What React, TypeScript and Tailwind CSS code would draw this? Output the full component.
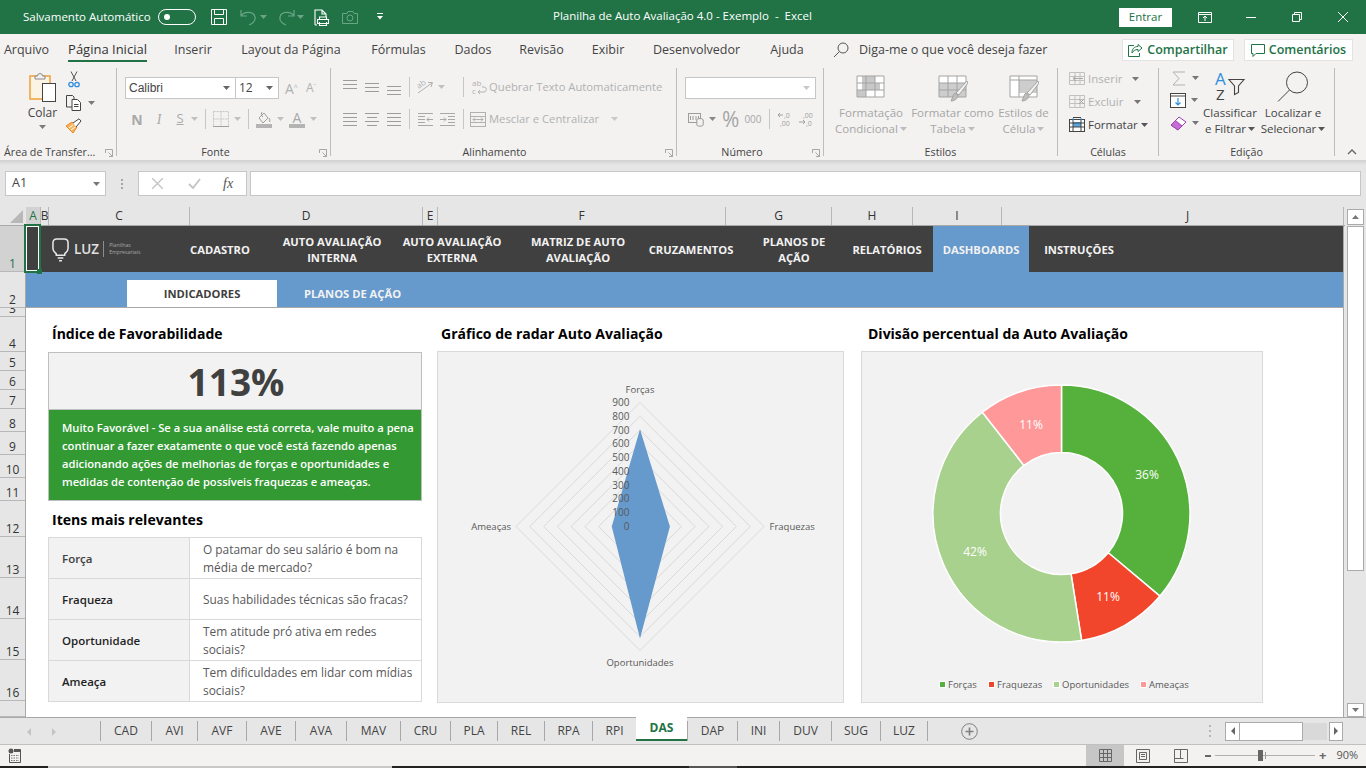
import React from "react";

const dim = "#b1b1b1";

const Caret = ({ c = "#7a7a7a", className = "" }: { c?: string; className?: string }) => (
  <svg width="7" height="4" viewBox="0 0 7 4" className={className}>
    <path d="M0 0h7L3.5 4z" fill={c} />
  </svg>
);

const Launcher = ({ c = "#a6a6a6" }: { c?: string }) => (
  <svg width="8" height="8" viewBox="0 0 8 8" fill="none" stroke={c}>
    <path d="M.5 4V.5H7.5V7.5H4M3.5 3.5L7 7M5 7.5H7.5V5" />
  </svg>
);

const Lines = ({ rows, c = "#9c9c9c", w = 14 }: { rows: [number, number, number][]; c?: string; w?: number }) => (
  <svg width={w} height="15" viewBox={`0 0 ${w} 15`} stroke={c} strokeWidth="1">
    {rows.map(([x1, x2, y], i) => (
      <path key={i} d={`M${x1} ${y + 0.5}H${x2}`} />
    ))}
  </svg>
);

const Clipboard = () => (
  <svg width="28" height="32" viewBox="0 0 28 32" fill="none">
    <rect x="1" y="5" width="20" height="23" fill="#fbf3e4" stroke="#f0a640" strokeWidth="1.6" />
    <path d="M6 8V5h2.5a2.5 2.5 0 0 1 5 0H16v3z" fill="#f3f2f1" stroke="#8a8a8a" />
    <rect x="13.5" y="12.5" width="13" height="18" fill="#fff" stroke="#444" />
  </svg>
);

const Scissors = () => (
  <svg width="12" height="17" viewBox="0 0 12 17" fill="none">
    <path d="M3 0.5L8 10M9 0.5L4 10" stroke="#555" />
    <circle cx="3" cy="13.5" r="2.2" stroke="#2f8fdc" strokeWidth="1.3" />
    <circle cx="9" cy="13.5" r="2.2" stroke="#2f8fdc" strokeWidth="1.3" />
  </svg>
);

const CopyIcon = () => (
  <svg width="17" height="16" viewBox="0 0 17 16" fill="none" stroke="#444">
    <path d="M1.5 .5H7.5L9 2V12H1.5z" fill="#f3f2f1" />
    <path d="M7 4.5H12.5L15.5 7.5V15.5H7z" fill="#fff" />
    <path d="M9 9.5H13.5M9 11.5H13.5" />
  </svg>
);

const Brush = () => (
  <svg width="17" height="16" viewBox="0 0 17 16" fill="none">
    <path d="M1 8L7 4L12 9L8 15z" fill="#f5b35e" stroke="#ea8a1f" />
    <path d="M4 10L8 7M6 12L10 9" stroke="#fff" />
    <path d="M8 5L14 .8L16 3L11 9" fill="#fff" stroke="#444" />
  </svg>
);

const Borders = () => (
  <svg width="16" height="16" viewBox="0 0 16 16" fill="none" stroke="#c4c4c4">
    <path d="M.5 .5H15.5V15M.5 .5V15M8 .5V15M.5 8H15.5" strokeDasharray="2 1" />
    <path d="M0 15.5H16" stroke="#9e9e9e" />
  </svg>
);

const FillColor = () => (
  <svg width="16" height="17" viewBox="0 0 16 17" fill="none">
    <path d="M3 7L8 2L12 7L7 12z" stroke="#9e9e9e" />
    <path d="M6 1C5 2 5 5 7 6M13 7C14 8 14 10 13.5 11" stroke="#9e9e9e" />
    <rect x="0" y="13" width="16" height="4" fill="#b4b4b4" />
  </svg>
);

const Orientation = () => (
  <svg width="18" height="16" viewBox="0 0 18 16" fill="none" stroke={dim} className="overflow-visible">
    <path d="M1 14L15 4M11 3.5L15.5 3.5L14 8" />
    <text x="0" y="8" fontSize="8" fill={dim} stroke="none" transform="rotate(-35 4 6)" fontFamily="'Open Sans',sans-serif">ab</text>
  </svg>
);

const WrapIcon = () => (
  <svg width="16" height="16" viewBox="0 0 16 16" fill="none" className="overflow-visible">
    <text x="0" y="7" fontSize="8" fill={dim} fontFamily="'Open Sans',sans-serif">ab</text>
    <text x="0" y="15" fontSize="8" fill={dim} fontFamily="'Open Sans',sans-serif">c</text>
    <path d="M6 13H12C15 13 15 8 12 8H10M8 11L6 13L8 15" stroke={dim} />
  </svg>
);

const MergeIcon = () => (
  <svg width="16" height="15" viewBox="0 0 16 15" fill="none" stroke={dim}>
    <rect x=".5" y=".5" width="15" height="14" />
    <path d="M0 4.5H16M0 10.5H16M3 7.5H13M5 5.5L3 7.5L5 9.5M11 5.5L13 7.5L11 9.5" />
  </svg>
);

const Indent = ({ flip = false }: { flip?: boolean }) => (
  <svg width="15" height="13" viewBox="0 0 15 13" fill="none" stroke="#a8a8a8">
    <path d="M0 .5H15M0 12.5H15" />
    {flip ? <path d="M8 3.5H15M8 6.5H15M8 9.5H15M0 6.5H6M4 4.5L6 6.5L4 8.5" /> : <path d="M0 3.5H7M0 9.5H7M9 6.5H15M11 4.5L9 6.5L11 8.5M0 6.5H7" />}
  </svg>
);

const Accounting = () => (
  <svg width="16" height="15" viewBox="0 0 16 15" fill="none" stroke="#9c9c9c">
    <rect x=".5" y="1.5" width="12" height="9" />
    <path d="M2.5 4V8M5 4V8M8 4V8M10.5 4V8" />
    <ellipse cx="12" cy="8" rx="3.2" ry="1.5" fill="#f3f2f1" />
    <path d="M8.8 8V13C8.8 14.5 15.2 14.5 15.2 13V8" fill="#f3f2f1" />
  </svg>
);

const Decimal = ({ a, b, left }: { a: string; b: string; left?: boolean }) => (
  <svg width="16" height="16" viewBox="0 0 16 16" fill="none" className="overflow-visible">
    <text x={left ? 7 : 4} y="7" fontSize="7" fill="#a0a0a0" fontFamily="'Open Sans',sans-serif">{a}</text>
    <text x={left ? 3 : 7} y="15" fontSize="7" fill="#a0a0a0" fontFamily="'Open Sans',sans-serif">{b}</text>
    <path d={left ? "M6 4H1M3 2L1 4L3 6" : "M0 11H6M4 9L6 11L4 13"} stroke="#a0a0a0" />
  </svg>
);

const StyleIcon = ({ kind }: { kind: number }) => (
  <svg width="30" height="28" viewBox="0 0 30 28" fill="none">
    {kind === 0 && (
      <>
        <rect x="1" y="1" width="27" height="21" fill="#fff" />
        <path d="M6 1H19V8H24V15H10V22H1V15H6z" fill="#c8c8c8" />
        <path d="M1 1H28V22H1zM1 8H28M1 15H28M10 1V22M19 1V22" stroke="#a3a3a3" />
      </>
    )}
    {kind === 1 && (
      <>
        <rect x="1" y="1" width="27" height="21" fill="#fff" />
        <rect x="1" y="8" width="27" height="14" fill="#cdcdcd" />
        <path d="M1 1H28V22H1zM1 8H28M1 15H28M10 1V22M19 1V22" stroke="#a3a3a3" />
      </>
    )}
    {kind === 2 && (
      <>
        <rect x="1" y="1" width="27" height="21" fill="#fff" />
        <rect x="10" y="5" width="18" height="13" fill="#cdcdcd" />
        <path d="M1 1H28V22H1zM1 5H28M10 1V22" stroke="#a3a3a3" />
      </>
    )}
    {kind !== 0 && (
      <>
        <path d="M29 6L18 18L21 20L30 8z" fill="#f3f2f1" stroke="#a3a3a3" />
        <path d="M13 26C16 26 20 24 20 20L17 18C15 19 15 22 13 26z" fill="#bdbdbd" stroke="#a3a3a3" />
      </>
    )}
  </svg>
);

const CellIcon = ({ kind }: { kind: number }) => (
  <svg width="17" height="15" viewBox="0 0 17 15" fill="none">
    {kind === 2 ? (
      <>
        <rect x=".5" y="2.5" width="15" height="12" fill="#fff" stroke="#444" />
        <rect x="4" y="5" width="8" height="5" fill="#5ba6dd" />
        <path d="M4 .5H12M.5 6H15.5M.5 10H15.5M4 2V15M12 2V15" stroke="#444" />
        <path d="M4 1V3M12 1V3" stroke="#2f8fdc" />
      </>
    ) : (
      <>
        <path d="M.5 1.5H15.5V13.5H.5zM.5 5.5H15.5M.5 9.5H15.5M6 1.5V13.5M11 1.5V13.5" stroke="#c1c1c1" />
        {kind === 0 ? <path d="M14 7.5H4M7 5L4 7.5L7 10" stroke="#a8a8a8" /> : <path d="M10 5L15 10M15 5L10 10" stroke="#a8a8a8" />}
      </>
    )}
  </svg>
);

const SortIcon = () => (
  <svg width="31" height="29" viewBox="0 0 31 29" fill="none" className="overflow-visible">
    <text x="0" y="13" fontSize="17" fill="#2f8fdc" fontFamily="'Open Sans',sans-serif">A</text>
    <text x="1" y="28" fontSize="15" fill="#444" fontFamily="'Open Sans',sans-serif">Z</text>
    <path d="M14 7.5H29L23.5 14V20.5L19.5 22.5V14z" stroke="#444" strokeWidth="1.1" />
  </svg>
);

const FindIcon = () => (
  <svg width="32" height="32" viewBox="0 0 32 32" fill="none" stroke="#444">
    <circle cx="20" cy="11.5" r="10.5" />
    <path d="M12.5 19L1 30.5" />
  </svg>
);

const Search = () => (
  <svg width="16" height="16" viewBox="0 0 16 16" fill="none" stroke="#555">
    <circle cx="10" cy="6" r="5" />
    <path d="M6.3 9.7L1 15" />
  </svg>
);

const tabsTop = [
  { t: "Arquivo", w: "w-[45px]", ml: "ml-[4px]" },
  { t: "Página Inicial", w: "w-[79px]", ml: "ml-[19px]", on: true },
  { t: "Inserir", w: "w-[36px]", ml: "ml-[28px]" },
  { t: "Layout da Página", w: "w-[100px]", ml: "ml-[30px]" },
  { t: "Fórmulas", w: "w-[53px]", ml: "ml-[31px]" },
  { t: "Dados", w: "w-[38px]", ml: "ml-[29px]" },
  { t: "Revisão", w: "w-[45px]", ml: "ml-[27px]" },
  { t: "Exibir", w: "w-[32px]", ml: "ml-[28px]" },
  { t: "Desenvolvedor", w: "w-[87px]", ml: "ml-[29px]" },
  { t: "Ajuda", w: "w-[34px]", ml: "ml-[30px]" },
];

const TitleBar = () => (
  <div className="h-[34px] bg-[#217346] flex items-center text-white text-[11.5px]">
    <div className="w-[553px] flex items-center shrink-0">
      <span className="ml-[23px] w-[135px] whitespace-nowrap">Salvamento Automático</span>
      <div className="w-[38px] h-[16px] rounded-full border border-white flex items-center pl-[5px]">
        <div className="w-[6px] h-[6px] rounded-full bg-white" />
      </div>
      <svg className="ml-[15px]" width="16" height="16" viewBox="0 0 16 16" fill="none" stroke="#fff">
        <path d="M.5 .5H15.5V15.5H.5zM3.5 .5V5.5H12.5V.5M3.5 15.5V9.5H12.5V15.5" />
      </svg>
      <svg className="ml-[13px]" width="18" height="17" viewBox="0 0 18 17" fill="none" stroke="#6aa586" strokeWidth="1.2">
        <path d="M1 1V7H7M1 7C4 2 14 2 15 8C16 12 12 15 9 16" />
      </svg>
      <Caret c="#6aa586" className="ml-[2px]" />
      <svg className="ml-[10px]" width="18" height="17" viewBox="0 0 18 17" fill="none" stroke="#6aa586" strokeWidth="1.2">
        <path d="M17 1V7H11M17 7C14 2 4 2 3 8C2 12 6 15 9 16" />
      </svg>
      <Caret c="#6aa586" className="ml-[2px]" />
      <svg className="ml-[10px]" width="16" height="17" viewBox="0 0 16 17" fill="none" stroke="#fff" strokeWidth="1.1">
        <path d="M1 16V1H8L12 5V8M8 1V5H12M1 16H3" />
        <path d="M3.5 10.5H14.5V14.5H3.5zM5.5 10.5V8H12.5V10.5M5.5 13V16.5H12.5V13" />
      </svg>
      <svg className="ml-[12px]" width="16" height="13" viewBox="0 0 16 13" fill="none" stroke="#6aa586">
        <path d="M.5 2.5H5L6 .5H11L12 2.5H15.5V12.5H.5z" />
        <circle cx="8" cy="7" r="3" />
      </svg>
      <svg className="ml-[19px]" width="6" height="8" viewBox="0 0 6 8" fill="#fff">
        <path d="M0 0h6v1H0zM0 3h6L3 6.5z" />
      </svg>
    </div>
    <div className="w-[258px] text-center whitespace-nowrap shrink-0 -mt-[2px]">Planilha de Auto Avaliação 4.0 - Exemplo&nbsp; -&nbsp; Excel</div>
    <div className="ml-[308px] w-[53px] h-[19px] bg-white text-[#217346] flex items-center justify-center">Entrar</div>
    <svg className="ml-[26px]" width="14" height="11" viewBox="0 0 14 11" fill="none" stroke="#fff">
      <path d="M.5 .5H13.5V10.5H.5zM.5 2.5H13.5M7 9V4.5M5 6L7 4L9 6" />
    </svg>
    <div className="ml-[34px] w-[10px] h-px bg-white" />
    <svg className="ml-[36px]" width="10" height="10" viewBox="0 0 10 10" fill="none" stroke="#fff">
      <path d="M.5 2.5H7.5V9.5H.5zM2.5 2.5V.5H9.5V7.5H7.5" />
    </svg>
    <svg className="ml-[36px]" width="10" height="10" viewBox="0 0 10 10" fill="none" stroke="#fff">
      <path d="M0 0L10 10M10 0L0 10" />
    </svg>
  </div>
);

const TabRow = () => (
  <div className="h-[32px] bg-[#f3f2f1] flex items-center text-[12.5px] text-[#444]">
    {tabsTop.map((t) => (
      <div key={t.t} className={`${t.ml} ${t.w} h-[32px] flex items-center justify-center whitespace-nowrap relative`}>
        <span className={t.on ? "text-[#333] font-medium text-[13px]" : ""}>{t.t}</span>
        {t.on && <div className="absolute left-0 right-0 bottom-[4px] h-[2px] bg-[#217346]" />}
      </div>
    ))}
    <div className="ml-[29px]"><Search /></div>
    <span className="ml-[10px] w-[194px] whitespace-nowrap">Diga-me o que você deseja fazer</span>
    <div className="ml-[69px] w-[112px] h-[22px] bg-white border border-[#e3e3e3] flex items-center justify-center gap-[4px] text-[#217346] font-semibold text-[12.5px] whitespace-nowrap">
      <svg width="15" height="14" viewBox="0 0 15 14" fill="none" stroke="#217346">
        <path d="M10 1.5L14 5L10 8.5V6.5C7 6.5 5 8 4 10C4 6 6 3.5 10 3.5zM6 2.5H.5V13.5H11.5V10" />
      </svg>
      Compartilhar
    </div>
    <div className="ml-[10px] w-[109px] h-[22px] bg-white border border-[#e3e3e3] flex items-center justify-center gap-[4px] text-[#217346] font-semibold text-[12.5px] whitespace-nowrap">
      <svg width="14" height="13" viewBox="0 0 14 13" fill="none" stroke="#217346">
        <path d="M.5 .5H13.5V9.5H5L2 12.5V9.5H.5z" />
      </svg>
      Comentários
    </div>
  </div>
);

const Group = ({ w, label, children, launcher = true, labelCls = "text-center" }: { w: string; label: string; children: React.ReactNode; launcher?: boolean; labelCls?: string }) => (
  <div className={`${w} h-[88px] mt-[2px] shrink-0 border-r border-[#bdbdbd] flex flex-col relative`}>
    <div className="h-[76px] shrink-0 flex">{children}</div>
    <div className={`h-[16px] shrink-0 text-[10.7px] text-[#444] leading-[16px] whitespace-nowrap ${labelCls}`}>{label}</div>
    {launcher && <div className="absolute right-[3px] bottom-[-1px]"><Launcher /></div>}
  </div>
);

const Ribbon = () => (
  <div className="h-[94px] bg-[#f3f2f1] flex text-[11.25px]">
    <Group w="w-[117px]" label="Área de Transfer..." labelCls="pl-[4px]">
      <div className="ml-[25px] w-[35px] flex flex-col items-center">
        <div className="mt-[3px]"><Clipboard /></div>
        <span className="mt-[2px] text-[12px] text-[#444] leading-[16px]">Colar</span>
        <Caret className="mt-[4px]" />
      </div>
      <div className="ml-[5px] flex flex-col">
        <div className="mt-[3px] ml-[3px]"><Scissors /></div>
        <div className="mt-[7px] flex items-center gap-[6px]"><CopyIcon /><Caret /></div>
        <div className="mt-[7px]"><Brush /></div>
      </div>
    </Group>

    <Group w="w-[214px]" label="Fonte" labelCls="text-center pr-[16px]">
      <div className="flex flex-col w-full">
        <div className="mt-[9px] ml-[8px] flex items-center">
          <div className="w-[111px] h-[22px] bg-white border border-[#c6c6c6] flex items-center justify-between pl-[3px] pr-[5px] text-[12px] font-['Liberation_Sans',sans-serif] text-[#444]">Calibri<Caret c="#666" /></div>
          <div className="w-[43px] h-[22px] bg-white border border-[#c6c6c6] border-l-0 flex items-center justify-between pl-[3px] pr-[5px] text-[12px] text-[#444]">12<Caret c="#666" /></div>
          <span className="ml-[6px] w-[20px] text-[14px] text-[#b1b1b1] whitespace-nowrap">A<sup className="text-[7px]">^</sup></span>
          <span className="w-[20px] ml-[1px] text-[12px] text-[#b1b1b1] whitespace-nowrap">A<sup className="text-[7px]">ˇ</sup></span>
        </div>
        <div className="mt-[9px] ml-[13px] flex items-center h-[22px] text-[#a9a9a9]">
          <span className="w-[14px] font-bold text-[14px] text-center">N</span>
          <span className="ml-[8px] w-[14px] italic text-[14px] text-center font-['Liberation_Serif',serif]">I</span>
          <span className="ml-[8px] w-[12px] underline text-[13px] text-center">S</span>
          <Caret c="#c0c0c0" className="ml-[5px]" />
          <div className="ml-[7px] w-px h-[20px] bg-[#c6c6c6]" />
          <div className="ml-[7px]"><Borders /></div>
          <Caret c="#c0c0c0" className="ml-[5px]" />
          <div className="ml-[7px] w-px h-[20px] bg-[#c6c6c6]" />
          <div className="ml-[7px]"><FillColor /></div>
          <Caret c="#c0c0c0" className="ml-[5px]" />
          <div className="ml-[5px] w-[16px] flex flex-col items-center leading-[13px]">
            <span className="text-[14px]">A</span>
            <div className="w-[16px] h-[4px] bg-[#b4b4b4]" />
          </div>
          <Caret c="#c0c0c0" className="ml-[5px]" />
        </div>
      </div>
    </Group>

    <Group w="w-[346px]" label="Alinhamento" labelCls="text-center pr-[18px]">
      <div className="flex flex-col w-full text-[#b1b1b1]">
        <div className="mt-[9px] ml-[12px] h-[20px] flex items-center">
          <Lines rows={[[0, 14, 0], [0, 14, 4], [0, 14, 8]]} />
          <div className="ml-[8px]"><Lines rows={[[0, 14, 3], [0, 14, 7], [0, 14, 11]]} /></div>
          <div className="ml-[8px]"><Lines rows={[[0, 14, 6], [0, 14, 10], [0, 14, 14]]} /></div>
          <div className="ml-[8px] w-px h-[20px] bg-[#c6c6c6]" />
          <div className="ml-[7px]"><Orientation /></div>
          <Caret c="#c0c0c0" className="ml-[3px]" />
          <div className="ml-[18px] w-px h-[20px] bg-[#c6c6c6]" />
          <div className="ml-[8px]"><WrapIcon /></div>
          <span className="ml-[1px] whitespace-nowrap">Quebrar Texto Automaticamente</span>
        </div>
        <div className="mt-[12px] ml-[12px] h-[20px] flex items-center">
          <Lines rows={[[0, 14, 1], [0, 14, 5], [0, 14, 9], [0, 14, 13]]} />
          <div className="ml-[8px]"><Lines rows={[[0, 14, 1], [2, 12, 5], [0, 14, 9], [2, 12, 13]]} /></div>
          <div className="ml-[8px]"><Lines rows={[[0, 14, 1], [0, 14, 5], [0, 14, 9], [0, 14, 13]]} /></div>
          <div className="ml-[8px] w-px h-[20px] bg-[#c6c6c6]" />
          <div className="ml-[8px]"><Indent /></div>
          <div className="ml-[7px]"><Indent flip /></div>
          <div className="ml-[8px] w-px h-[20px] bg-[#c6c6c6]" />
          <div className="ml-[6px]"><MergeIcon /></div>
          <span className="ml-[3px] whitespace-nowrap">Mesclar e Centralizar</span>
          <Caret c="#c8c8c8" className="ml-[12px]" />
        </div>
      </div>
    </Group>

    <Group w="w-[147px]" label="Número" labelCls="text-center pr-[16px]">
      <div className="flex flex-col w-full">
        <div className="mt-[9px] ml-[8px] w-[131px] h-[22px] bg-white border border-[#c6c6c6] flex items-center justify-end pr-[5px]"><Caret c="#c8c8c8" /></div>
        <div className="mt-[9px] ml-[11px] h-[22px] flex items-center text-[#a6a6a6]">
          <Accounting />
          <Caret c="#888" className="ml-[5px]" />
          <span className="ml-[6px] text-[21px] leading-none">%</span>
          <span className="ml-[5px] text-[10px]">000</span>
          <div className="ml-[7px] w-px h-[20px] bg-[#c6c6c6]" />
          <div className="ml-[7px]"><Decimal a=",0" b=",00" left /></div>
          <div className="ml-[6px]"><Decimal a=",00" b=",0" /></div>
        </div>
      </div>
    </Group>

    <Group w="w-[234px]" label="Estilos" launcher={false}>
      <div className="flex text-[#a6a6a6] text-[11.5px] leading-[16px] text-center">
        <div className="w-[94px] flex flex-col items-center">
          <div className="mt-[7px] h-[30px]"><StyleIcon kind={0} /></div>
          <span className="whitespace-nowrap">Formatação</span>
          <span className="whitespace-nowrap flex items-center gap-[2px]">Condicional<Caret c="#bdbdbd" /></span>
        </div>
        <div className="w-[69px] flex flex-col items-center">
          <div className="mt-[7px] h-[30px]"><StyleIcon kind={1} /></div>
          <span className="whitespace-nowrap">Formatar como</span>
          <span className="whitespace-nowrap flex items-center gap-[2px]">Tabela<Caret c="#bdbdbd" /></span>
        </div>
        <div className="w-[73px] flex flex-col items-center">
          <div className="mt-[7px] h-[30px]"><StyleIcon kind={2} /></div>
          <span className="whitespace-nowrap">Estilos de</span>
          <span className="whitespace-nowrap flex items-center gap-[2px]">Célula<Caret c="#bdbdbd" /></span>
        </div>
      </div>
    </Group>

    <Group w="w-[101px]" label="Células" launcher={false}>
      <div className="ml-[11px] -mt-[1px] flex flex-col text-[11.5px]">
        <div className="h-[23px] flex items-center text-[#b1b1b1]"><CellIcon kind={0} /><span className="ml-[2px] w-[44px]">Inserir</span><Caret c="#777" /></div>
        <div className="h-[23px] flex items-center text-[#b1b1b1]"><CellIcon kind={1} /><span className="ml-[2px] w-[46px]">Excluir</span><Caret c="#777" /></div>
        <div className="h-[23px] flex items-center text-[#444]"><CellIcon kind={2} /><span className="ml-[2px] w-[53px]">Formatar</span><Caret c="#555" /></div>
      </div>
    </Group>

    <Group w="w-[176px]" label="Edição" launcher={false}>
      <div className="ml-[11px] w-[36px] flex flex-col">
        <div className="mt-[0px] h-[20px] flex items-center">
          <svg className="ml-[2px]" width="14" height="15" viewBox="0 0 14 15" fill="none" stroke="#b1b1b1"><path d="M13 1H1L7 7.5L1 14H13" /></svg>
          <Caret c="#777" className="ml-[6px]" />
        </div>
        <div className="mt-[2px] h-[20px] flex items-center">
          <svg width="16" height="15" viewBox="0 0 16 15" fill="none"><rect x=".5" y=".5" width="15" height="14" fill="#fff" stroke="#444" /><path d="M.5 3H15.5" stroke="#444" /><path d="M8 5V12M5.5 9.5L8 12L10.5 9.5" stroke="#2f8fdc" strokeWidth="1.2" /></svg>
          <Caret c="#777" className="ml-[5px]" />
        </div>
        <div className="mt-[3px] h-[20px] flex items-center">
          <svg width="17" height="15" viewBox="0 0 17 15" fill="none"><path d="M1 9L9 1L16 6L8 14z" fill="#fff" stroke="#a03fb3" /><path d="M1 9L5.5 4.5L12 10L8 14z" fill="#c86dd8" stroke="#a03fb3" /></svg>
          <Caret c="#777" className="ml-[5px]" />
        </div>
      </div>
      <div className="w-[48px] flex flex-col items-center text-[11.5px] text-[#444] leading-[16px]">
        <div className="mt-[4px] h-[33px]"><SortIcon /></div>
        <span className="whitespace-nowrap">Classificar</span>
        <span className="whitespace-nowrap flex items-center gap-[2px]">e Filtrar<Caret c="#555" /></span>
      </div>
      <div className="w-[78px] flex flex-col items-center text-[11.5px] text-[#444] leading-[16px]">
        <div className="mt-[3px] h-[34px]"><FindIcon /></div>
        <span className="whitespace-nowrap">Localizar e</span>
        <span className="whitespace-nowrap flex items-center gap-[2px]">Selecionar<Caret c="#555" /></span>
      </div>
    </Group>

    <div className="ml-[12px] mt-[83px]">
      <svg width="10" height="6" viewBox="0 0 10 6" fill="none" stroke="#666" strokeWidth="1.4"><path d="M1 5L5 1L9 5" /></svg>
    </div>
  </div>
);

const FormulaBar = () => (
  <div className="h-[42px] pt-[6px] pl-[5px] bg-[#e6e6e6] flex items-start">
    <div className="w-[101px] h-[25px] bg-white border border-[#c6c6c6] flex items-center justify-between pl-[6px] pr-[5px] text-[12.5px] text-[#444]">A1<Caret c="#777" /></div>
    <svg className="ml-[15px] mt-[8px]" width="3" height="11" viewBox="0 0 3 11" fill="#a6a6a6"><path d="M0 0h2v2H0zM0 4h2v2H0zM0 8h2v2H0z" /></svg>
    <div className="ml-[14px] w-[109px] h-[25px] bg-white border border-[#c6c6c6] flex items-center">
      <svg className="ml-[13px]" width="11" height="11" viewBox="0 0 11 11" stroke="#c4c4c4" strokeWidth="1.4" fill="none"><path d="M0 0L11 11M11 0L0 11" /></svg>
      <svg className="ml-[25px]" width="13" height="11" viewBox="0 0 13 11" stroke="#c4c4c4" strokeWidth="1.8" fill="none"><path d="M1 6L5 10L12 1" /></svg>
      <span className="ml-[22px] italic text-[14px] font-['Liberation_Serif',serif] text-[#555]">fx</span>
    </div>
    <div className="ml-[3px] w-[1111px] h-[25px] bg-white border border-[#c6c6c6]" />
  </div>
);

const cols = [
  { n: "A", w: "w-[15px]", on: true },
  { n: "B", w: "w-[8px]" },
  { n: "C", w: "w-[141px]" },
  { n: "D", w: "w-[233px]" },
  { n: "E", w: "w-[15px]" },
  { n: "F", w: "w-[288px]" },
  { n: "G", w: "w-[106px]" },
  { n: "H", w: "w-[81px]" },
  { n: "I", w: "w-[89px]" },
  { n: "J", w: "w-[342px] pl-[30px]" },
];

const rowsHdr = [
  { n: "1", h: "h-[46px]", on: true },
  { n: "2", h: "h-[36px]" },
  { n: "3", h: "h-[9px]" },
  { n: "4", h: "h-[35px]" },
  { n: "5", h: "h-[19px]" },
  { n: "6", h: "h-[19px]" },
  { n: "7", h: "h-[19px]" },
  { n: "8", h: "h-[23px]" },
  { n: "9", h: "h-[23px]" },
  { n: "10", h: "h-[23px]" },
  { n: "11", h: "h-[23px]" },
  { n: "12", h: "h-[36px]" },
  { n: "13", h: "h-[41px]" },
  { n: "14", h: "h-[41px]" },
  { n: "15", h: "h-[41px]" },
  { n: "16", h: "h-[41px]" },
  { n: "", h: "h-[16px]" },
];

const navItems = [
  { a: "CADASTRO", w: "w-[80px]" },
  { a: "AUTO AVALIAÇÃO", b: "INTERNA", w: "w-[120px]", ml: "ml-[12px]" },
  { a: "AUTO AVALIAÇÃO", b: "EXTERNA", w: "w-[120px]" },
  { a: "MATRIZ DE AUTO", b: "AVALIAÇÃO", w: "w-[132px]" },
  { a: "CRUZAMENTOS", w: "w-[94px]" },
  { a: "PLANOS DE", b: "AÇÃO", w: "w-[112px]" },
  { a: "RELATÓRIOS", w: "w-[74px]" },
  { a: "DASHBOARDS", w: "w-[96px]", ml: "ml-[9px]", on: true },
  { a: "INSTRUÇÕES", w: "w-[100px]" },
];

const Logo = () => (
  <div className="w-[154px] flex items-center pl-[26px] text-[#e0e0e0] shrink-0">
    <svg width="17" height="25" viewBox="0 0 18 26" fill="none" stroke="#e8e8e8" strokeWidth="1.6">
      <path d="M5 2H13C15.5 2 17 3.5 17 6V12C17 15 15 16 13.5 17.5V19H4.5V17.5C3 16 1 15 1 12V6C1 3.5 2.5 2 5 2z" />
      <path d="M6 22H12M7.5 25H10.5" />
    </svg>
    <span className="ml-[5px] text-[13.5px] font-semibold">LUZ</span>
    <div className="ml-[4px] w-px h-[16px] bg-[#8c8c8c]" />
    <span className="ml-[5px] text-[5.2px] leading-[7px] text-[#a6a6a6] whitespace-nowrap">Planilhas<br />Empresariais</span>
  </div>
);

const cardTitle = "pt-[8px] flex items-center text-[14px] font-bold text-black whitespace-nowrap";

const relevant = [
  { k: "Força", v: ["O patamar do seu salário é bom na", "média de mercado?"], c: "text-[#404040]" },
  { k: "Fraqueza", v: ["Suas habilidades técnicas são fracas?"], c: "text-[#1f1f1f]" },
  { k: "Oportunidade", v: ["Tem atitude pró ativa em redes", "sociais?"], c: "text-[#1f1f1f]" },
  { k: "Ameaça", v: ["Tem dificuldades em lidar com mídias", "sociais?"], c: "text-[#1f1f1f]" },
];

const LeftColumn = () => (
  <div className="ml-[22px] w-[374px] shrink-0">
    <div className={`${cardTitle} h-[44px] pl-[4px] pb-[1px]`}>Índice de Favorabilidade</div>
    <div className="h-[57px] bg-[#f2f2f2] border border-[#bfbfbf] border-b-0 flex items-center justify-center pl-[2px] text-[37px] font-bold text-[#404040] leading-none">113%</div>
    <div className="h-[92px] bg-[#339933] border border-[#bfbfbf] pl-[13px] flex flex-col justify-center text-[11.2px] font-semibold text-white leading-[18px] whitespace-nowrap">
      <span>Muito Favorável - Se a sua análise está correta, vale muito a pena</span>
      <span>continuar a fazer exatamente o que você está fazendo apenas</span>
      <span>adicionando ações de melhorias de forças e oportunidades e</span>
      <span>medidas de contenção de possíveis fraquezas e ameaças.</span>
    </div>
    <div className="h-[36px] pt-[1px] flex items-center pl-[4px] text-[14.1px] font-bold text-black">Itens mais relevantes</div>
    <div className="border border-[#d9d9d9] border-b-0">
      {relevant.map((r) => (
        <div key={r.k} className="h-[41px] flex border-b border-[#d9d9d9]">
          <div className={`w-[141px] shrink-0 bg-[#f2f2f2] border-r border-[#d9d9d9] pl-[13px] pt-[1px] flex items-center text-[11.5px] font-semibold ${r.c}`}>{r.k}</div>
          <div className="pl-[13px] flex flex-col justify-center text-[11.9px] leading-[18px] text-[#595959] whitespace-nowrap">
            {r.v.map((l) => <span key={l}>{l}</span>)}
          </div>
        </div>
      ))}
    </div>
  </div>
);

const radar = { cx: 640, cy: 526.5, u: 124 / 900 };
const diamond = (t: number, r: number, b: number, l: number) =>
  `${radar.cx},${radar.cy - t * radar.u} ${radar.cx + r * radar.u},${radar.cy} ${radar.cx},${radar.cy + b * radar.u} ${radar.cx - l * radar.u},${radar.cy}`;

const RadarChart = () => (
  <svg className="w-[405px] h-[350px] block" viewBox="438 352 405 350" fontFamily="'Open Sans',sans-serif" fontSize="9.5" fill="#595959">
    {[100, 200, 300, 400, 500, 600, 700, 800, 900].map((v) => (
      <polygon key={v} points={diamond(v, v, v, v)} fill="none" stroke="#d9d9d9" />
    ))}
    <polygon points={diamond(705, 217, 812, 205)} fill="#6699cc" />
    {[900, 800, 700, 600, 500, 400, 300, 200, 100, 0].map((v) => (
      <text key={v} x="629.5" y={radar.cy - v * radar.u + 3.5} textAnchor="end" fontSize="10">{v}</text>
    ))}
    <text x="640" y="393" textAnchor="middle">Forças</text>
    <text x="769.5" y="530">Fraquezas</text>
    <text x="640" y="666" textAnchor="middle">Oportunidades</text>
    <text x="511" y="530" textAnchor="end">Ameaças</text>
  </svg>
);

const cx = 1061.5;
const cy = 513.5;
const point = (r: number, deg: number) => {
  const a = ((deg - 90) * Math.PI) / 180;
  return `${cx + r * Math.cos(a)} ${cy + r * Math.sin(a)}`;
};
const slice = (from: number, to: number) => {
  const large = to - from > 180 ? 1 : 0;
  return `M${point(128.5, from)}A128.5 128.5 0 ${large} 1 ${point(128.5, to)}L${point(61, to)}A61 61 0 ${large} 0 ${point(61, from)}Z`;
};

const slices = [
  { from: 0, to: 130, c: "#55b13c" },
  { from: 130, to: 171, c: "#f2462c" },
  { from: 171, to: 322, c: "#a9d18e" },
  { from: 322, to: 360, c: "#ff9999" },
];

const legend = [
  { t: "Forças", x: 940, c: "#55b13c" },
  { t: "Fraquezas", x: 989, c: "#f2462c" },
  { t: "Oportunidades", x: 1054, c: "#a9d18e" },
  { t: "Ameaças", x: 1141, c: "#ff9999" },
];

const DonutChart = () => (
  <svg className="w-[400px] h-[350px] block" viewBox="862 352 400 350" fontFamily="'Open Sans',sans-serif">
    {slices.map((s) => (
      <path key={s.from} d={slice(s.from, s.to)} fill={s.c} stroke="#fff" strokeWidth="1.5" />
    ))}
    <g fill="#fff" fontSize="12" textAnchor="middle">
      <text x="1147" y="479">36%</text>
      <text x="1108" y="601">11%</text>
      <text x="975" y="556">42%</text>
      <text x="1031" y="429">11%</text>
    </g>
    {legend.map((l) => (
      <g key={l.t}>
        <rect x={l.x - 1} y="681" width="7" height="7" fill="#fff" />
        <rect x={l.x} y="682" width="5" height="5" fill={l.c} />
        <text x={l.x + 8} y="687.5" fontSize="9.5" fill="#595959">{l.t}</text>
      </g>
    ))}
  </svg>
);

const Sheet = () => (
  <div className="flex">
    <div className="w-[26px] shrink-0 bg-[#e6e6e6] border-r border-[#a8a8a8]">
      {rowsHdr.map((r, i) => (
        <div key={i} className={`${r.h} overflow-hidden border-b border-[#b8b8b8] flex items-end justify-center text-[12px] leading-[15px] ${r.on ? "bg-[#d2d2d2] text-[#217346]" : "text-[#333]"}`}>
          {r.n}
        </div>
      ))}
    </div>
    <div className="w-[1318px] shrink-0 bg-white border-r border-[#a8a8a8]">
      <div className="h-[46px] bg-[#404040] flex relative">
        <Logo />
        {navItems.map((n) => (
          <div key={n.a + (n.b ?? "")} className={`${n.w} ${n.ml ?? ""} shrink-0 pt-[1px] flex flex-col items-center justify-center text-[11.2px] leading-[16px] font-bold whitespace-nowrap text-[#f2f2f2] ${n.on ? "bg-[#6699cc]" : ""}`}>
            <span>{n.a}</span>
            {n.b && <span>{n.b}</span>}
          </div>
        ))}
        <div className="absolute -left-[2px] -top-[2px] w-[17px] h-[49px] border-2 border-[#217346]">
          <div className="w-full h-full border border-white" />
          <div className="absolute -right-[3px] -bottom-[3px] w-[5px] h-[5px] bg-[#217346]" />
        </div>
      </div>
      <div className="h-[36px] bg-[#6699cc] border-b border-[#a8a8a8] flex items-end pl-[101px] text-[11.2px] font-bold">
        <div className="w-[150px] h-[27px] pt-[2px] bg-white text-[#404040] flex items-center justify-center">INDICADORES</div>
        <div className="ml-[27px] h-[27px] pt-[2px] flex items-center text-[#f2f2f2]">PLANOS DE AÇÃO</div>
      </div>
      <div className="flex h-[409px] overflow-hidden">
        <LeftColumn />
        <div className="ml-[15px] w-[407px] shrink-0">
          <div className={`${cardTitle} pl-[4px] h-[43px]`}>Gráfico de radar Auto Avaliação</div>
          <div className="bg-[#f2f2f2] border border-[#d9d9d9] w-[407px] h-[352px] overflow-hidden"><RadarChart /></div>
        </div>
        <div className="ml-[17px] w-[402px] shrink-0">
          <div className={`${cardTitle} pl-[7px] h-[43px]`}>Divisão percentual da Auto Avaliação</div>
          <div className="bg-[#f2f2f2] border border-[#d9d9d9] w-[402px] h-[352px] overflow-hidden"><DonutChart /></div>
        </div>
      </div>
    </div>
  </div>
);

const VScroll = () => (
  <div className="ml-[2px] pt-[2px] w-[17px] flex flex-col">
    <div className="h-[16px] bg-white border border-[#ababab] flex items-center justify-center"><svg width="7" height="4" viewBox="0 0 7 4"><path d="M3.5 0L7 4H0z" fill="#777" /></svg></div>
    <div className="h-[345px] bg-white border border-[#ababab] mt-px" />
    <div className="flex-1" />
    <div className="h-[14px] bg-white border border-[#ababab] flex items-center justify-center"><Caret c="#777" /></div>
  </div>
);

const sheetTabs = [
  { t: "CAD", w: "w-[51px]" }, { t: "AVI", w: "w-[46px]" }, { t: "AVF", w: "w-[49px]" },
  { t: "AVE", w: "w-[49px]" }, { t: "AVA", w: "w-[51px]" }, { t: "MAV", w: "w-[54px]" },
  { t: "CRU", w: "w-[50px]" }, { t: "PLA", w: "w-[47px]" }, { t: "REL", w: "w-[47px]" },
  { t: "RPA", w: "w-[48px]" }, { t: "RPI", w: "w-[44px]" }, { t: "DAS", w: "w-[51px]", on: true },
  { t: "DAP", w: "w-[50px]" }, { t: "INI", w: "w-[42px]" }, { t: "DUV", w: "w-[52px]" },
  { t: "SUG", w: "w-[49px]" }, { t: "LUZ", w: "w-[47px]" },
];

const SheetTabs = () => (
  <div className="h-[28px] bg-[#e6e6e6] border-b border-[#c0c0c0] flex items-start text-[12px] text-[#444]">
    <div className="w-[100px] h-[28px] border-t border-[#a8a8a8] flex items-center pl-[27px] gap-[21px] shrink-0">
      <svg width="4" height="8" viewBox="0 0 4 8"><path d="M4 0V8L0 4z" fill="#c4c4c4" /></svg>
      <svg width="4" height="8" viewBox="0 0 4 8"><path d="M0 0V8L4 4z" fill="#c4c4c4" /></svg>
    </div>
    {sheetTabs.map((t) =>
      t.on ? (
        <div key={t.t} className={`${t.w} h-[24px] shrink-0 bg-white border-b-2 border-[#217346] text-[#217346] font-bold flex items-center justify-center`}>{t.t}</div>
      ) : (
        <div key={t.t} className={`${t.w} h-[28px] shrink-0 border-t border-[#a8a8a8] pt-[3px] pb-[4px]`}>
          <div className="h-full flex items-center justify-center border-l border-[#a8a8a8]">{t.t}</div>
        </div>
      )
    )}
    <div className="flex-1 h-[28px] border-t border-[#a8a8a8] pt-[3px] pb-[4px] flex items-center">
      <div className="h-full border-l border-[#a8a8a8] flex items-center pl-[33px]">
        <svg width="17" height="17" viewBox="0 0 17 17" fill="none" stroke="#7f7f7f"><circle cx="8.5" cy="8.5" r="7.8" /><path d="M8.5 4.5V12.5M4.5 8.5H12.5" strokeWidth="1.6" /></svg>
      </div>
      <svg className="ml-[231px]" width="3" height="13" viewBox="0 0 3 13" fill="#b4b4b4"><path d="M0 0h2v2H0zM0 5h2v2H0zM0 10h2v2H0z" /></svg>
      <div className="ml-[13px] flex items-center h-[19px]">
        <div className="w-[15px] h-[19px] bg-white border border-[#ababab] flex items-center justify-center"><svg width="4" height="8" viewBox="0 0 4 8"><path d="M4 0V8L0 4z" fill="#666" /></svg></div>
        <div className="w-[63px] h-[19px] bg-white border border-[#ababab] border-l-0" />
        <div className="w-[24px] h-[17px] bg-[#d9d9d9]" />
        <div className="ml-[2px] w-[14px] h-[19px] bg-white border border-[#ababab] flex items-center justify-center"><svg width="4" height="8" viewBox="0 0 4 8"><path d="M0 0V8L4 4z" fill="#666" /></svg></div>
      </div>
    </div>
  </div>
);

const StatusBar = () => (
  <div className="h-[21px] bg-[#f3f2f1] flex items-center text-[11px] text-[#555]">
    <svg className="ml-[8px]" width="13" height="15" viewBox="0 0 13 15" fill="none">
      <circle cx="3" cy="3" r="2.5" fill="#555" />
      <path d="M6 1.5H12.5V14.5H1.5V6" stroke="#555" />
      <path d="M6 1.5H12.5V4H6z" fill="#555" />
      <path d="M3 7.5H11M3 10H11M3 12.5H11" stroke="#777" strokeDasharray="1.5 1" />
    </svg>
    <div className="ml-[1065px] w-[38px] h-[21px] bg-[#c6c6c6] flex items-center justify-center">
      <svg width="13" height="13" viewBox="0 0 13 13" fill="none" stroke="#666"><path d="M.5 .5H12.5V12.5H.5zM.5 4.5H12.5M.5 8.5H12.5M4.5 .5V12.5M8.5 .5V12.5" /></svg>
    </div>
    <svg className="ml-[12px]" width="14" height="14" viewBox="0 0 14 14" fill="none" stroke="#666"><path d="M.5 .5H13.5V13.5H.5zM3.5 3.5H10.5V10.5H3.5zM5 5.5H9M5 7.5H9" /></svg>
    <svg className="ml-[24px]" width="14" height="14" viewBox="0 0 14 14" fill="none" stroke="#666"><path d="M.5 .5H13.5V13.5H.5zM.5 9.5H9.5M6.5 .5V9.5" /></svg>
    <div className="ml-[17px] w-[6px] h-[2px] bg-[#666]" />
    <div className="ml-[4px] w-[100px] h-px bg-[#b0b0b0] flex items-center relative">
      <div className="absolute left-[43px] w-[5px] h-[11px] bg-[#666]" />
      <div className="absolute left-[50px] w-px h-[7px] bg-[#999]" />
    </div>
    <span className="ml-[4px] text-[#666] text-[13px] font-bold leading-none">+</span>
    <span className="ml-[10px] whitespace-nowrap">90%</span>
  </div>
);

export default function App() {
  return (
    <div className="w-[1366px] h-[768px] overflow-hidden bg-[#e6e6e6] flex flex-col font-['Open_Sans',sans-serif] text-[#444]">
      <TitleBar />
      <TabRow />
      <Ribbon />
      <div className="h-[5px] bg-gradient-to-b from-[#cfcfcf] to-[#e6e6e6]" />
      <FormulaBar />
      <div className="flex">
        <div className="w-[1345px] shrink-0">
          <div className="h-[19px] flex border-b border-[#a8a8a8]">
            <div className="w-[26px] shrink-0 flex items-end justify-end pr-[3px] pb-[2px]">
              <svg width="13" height="13" viewBox="0 0 13 13"><path d="M13 0V13H0z" fill="#b8b8b8" /></svg>
            </div>
            {cols.map((c) => (
              <div key={c.n} className={`${c.w} shrink-0 border-r border-[#b8b8b8] flex items-center justify-center text-[12px] ${c.on ? "bg-[#d2d2d2] text-[#217346]" : "text-[#333]"}`}>{c.n}</div>
            ))}
          </div>
          <Sheet />
        </div>
        <VScroll />
      </div>
      <SheetTabs />
      <StatusBar />
      <div className="h-[2px] flex bg-[#222]">
        <div className="ml-[48px] w-[344px] bg-[#c8c8c8]" />
        <div className="ml-[297px] w-[48px] bg-[#555]" />
      </div>
    </div>
  );
}
